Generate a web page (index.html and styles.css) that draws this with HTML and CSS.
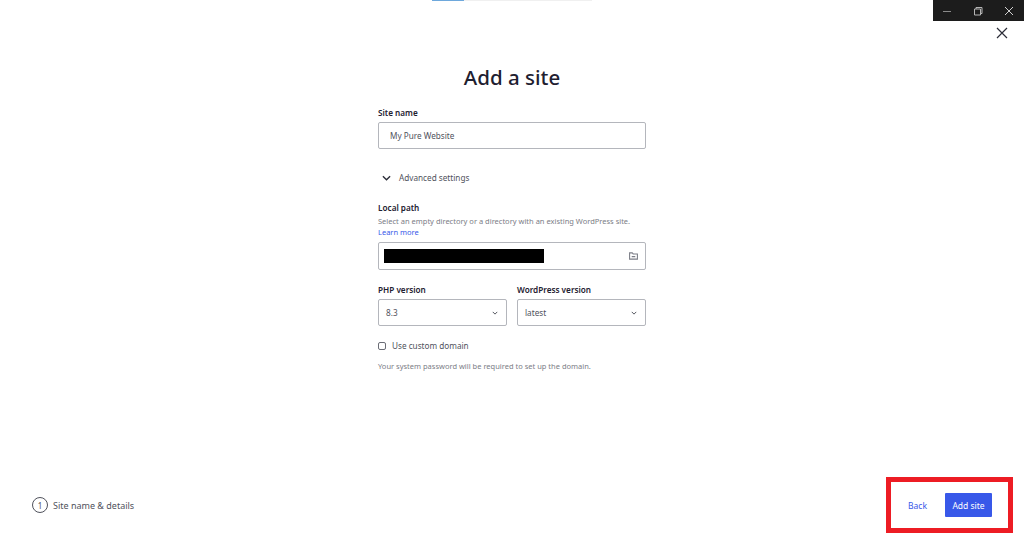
FILE: index.html
```html
<!DOCTYPE html>
<html lang="en">
<head>
    <meta charset="UTF-8">
    <title>Add a site</title>
    <link rel="stylesheet" href="styles.css">
</head>
<body>

<div class="progress"><div class="progress-fill"></div></div>

<!-- window buttons -->
<div class="window-controls">
    <div class="win-btn">
        <svg width="10" height="10" viewBox="0 0 10 10"><path d="M0 5.5H8" stroke="#8a8a8a" fill="none"/></svg>
    </div>
    <div class="win-btn">
        <svg width="10" height="10" viewBox="0 0 10 10"><path d="M1.5 3H7.5V9H1.5ZM3 3V1.5H9V7.5H7.5" stroke="#b5b5b5" fill="none"/></svg>
    </div>
    <div class="win-btn">
        <svg width="10" height="10" viewBox="0 0 10 10"><path d="M1 1L9 9M9 1L1 9" stroke="#d0d0d0" fill="none"/></svg>
    </div>
</div>

<div class="close-row">
    <svg width="12" height="12" viewBox="0 0 12 12"><path d="M1 1L11 11M11 1L1 11" stroke="#2b2d38" stroke-width="1.2" fill="none"/></svg>
</div>

<main class="content">
    <h1 class="title">Add a site</h1>

    <div class="form">
        <label class="label">Site name</label>
        <div class="input">My Pure Website</div>

        <div class="advanced">
            <svg width="9" height="6" viewBox="0 0 10 6"><path d="M1 1L5 5L9 1" stroke="#2b2d38" stroke-width="1.5" fill="none"/></svg>
            <span>Advanced settings</span>
        </div>

        <label class="label">Local path</label>
        <p class="hint">Select an empty directory or a directory with an existing WordPress site.<br><a class="link">Learn more</a></p>
        <div class="input input-path">
            <div class="redacted"></div>
            <svg width="9" height="8" viewBox="0 0 10 9"><path d="M0.6 8V1H3.6L4.6 2.2H9.4V8ZM3 5.2H7" stroke="#7b7d86" stroke-width="1.2" fill="none"/></svg>
        </div>

        <div class="versions">
            <div>
                <label class="label">PHP version</label>
                <div class="input select">
                    <span>8.3</span>
                    <svg width="6" height="4" viewBox="0 0 8 5"><path d="M1 1L4 4L7 1" stroke="#50525c" stroke-width="1.3" fill="none"/></svg>
                </div>
            </div>
            <div>
                <label class="label">WordPress version</label>
                <div class="input select">
                    <span>latest</span>
                    <svg width="6" height="4" viewBox="0 0 8 5"><path d="M1 1L4 4L7 1" stroke="#50525c" stroke-width="1.3" fill="none"/></svg>
                </div>
            </div>
        </div>

        <div class="checkbox-row">
            <span class="checkbox"></span>
            <span>Use custom domain</span>
        </div>
        <p class="hint domain-hint">Your system password will be required to set up the domain.</p>
    </div>
</main>

<footer class="footer">
    <div class="step">
        <span class="step-num">1</span>
        <span>Site name &amp; details</span>
    </div>
    <div class="actions">
        <a class="back">Back</a>
        <div class="primary">Add site</div>
    </div>
</footer>

<!-- red box drawn over the screenshot -->
<div class="highlight"></div>

</body>
</html>
```

FILE: styles.css
```css
* {
    box-sizing: border-box;
}
body {
    font-family: 'Noto Sans', 'Open Sans', sans-serif;
    margin: 0;
    background-color: #fff;
    color: #1e2030;
    height: 100vh;
    overflow: hidden;
    display: flex;
    flex-direction: column;
    position: relative;
}
.progress {
    width: 160px;
    height: 1px;
    margin: 0 auto;
    background-color: #f0f0f0;
    flex-shrink: 0;
}
.progress-fill {
    width: 32px;
    height: 100%;
    background-color: #6ea8dc;
}
.window-controls {
    position: absolute;
    top: 0;
    right: 0;
    width: 91px;
    height: 21px;
    background-color: #1c1c1c;
    display: flex;
}
.win-btn {
    flex: 1;
    display: flex;
    align-items: center;
    justify-content: center;
}
.close-row {
    display: flex;
    justify-content: flex-end;
    padding: 26px 16px 0 0;
    height: 39px;
    flex-shrink: 0;
}
.content {
    display: flex;
    flex-direction: column;
    align-items: center;
}
.title {
    margin: 21px 0 0;
    font-size: 20.5px;
    line-height: 32px;
    font-weight: 500;
}
.form {
    width: 268px;
    margin-top: 14px;
    font-size: 8.2px;
}
.label {
    display: block;
    font-size: 8.2px;
    line-height: 12px;
    font-weight: 600;
    color: #1e2030;
}
.input {
    height: 27px;
    margin-top: 3px;
    padding: 0 11px;
    border: 1px solid #b4b6bc;
    border-radius: 2px;
    display: flex;
    align-items: center;
    color: #50525c;
}
.advanced {
    display: flex;
    align-items: center;
    gap: 8px;
    margin: 23px 0 18px 4px;
    line-height: 12px;
    color: #50525c;
}
.hint {
    margin: 2px 0 0;
    font-size: 7.5px;
    line-height: 11px;
    color: #7b7d86;
}
.link {
    color: #3858e9;
}
.input-path {
    height: 28px;
    padding: 0 7px 0 5px;
    justify-content: space-between;
    margin-top: 4px;
}
.redacted {
    width: 160px;
    height: 14px;
    background-color: #000;
}
.versions {
    display: grid;
    grid-template-columns: 1fr 1fr;
    gap: 10px;
    margin-top: 14px;
}
.select {
    padding: 0 8px 0 7px;
    justify-content: space-between;
}
.checkbox-row {
    display: flex;
    align-items: center;
    gap: 6px;
    margin-top: 14px;
    line-height: 12px;
    color: #50525c;
}
.checkbox {
    width: 8px;
    height: 8px;
    border: 1px solid #6b6d76;
    border-radius: 2px;
}
.domain-hint {
    margin-top: 9px;
}
.footer {
    margin-top: auto;
    display: flex;
    justify-content: space-between;
    align-items: center;
    padding: 0 32px;
    height: 24px;
    margin-bottom: 30px;
}
.step {
    display: flex;
    align-items: center;
    gap: 5px;
    font-size: 9px;
    color: #50525c;
}
.step-num {
    width: 16px;
    height: 16px;
    border: 1px solid #50525c;
    border-radius: 50%;
    font-size: 8px;
    display: flex;
    align-items: center;
    justify-content: center;
}
.actions {
    display: flex;
    align-items: center;
    gap: 18px;
    font-size: 8.5px;
}
.back {
    color: #3858e9;
}
.primary {
    width: 47px;
    height: 24px;
    background-color: #3858e9;
    color: #fff;
    border-radius: 1px;
    display: flex;
    align-items: center;
    justify-content: center;
}
.highlight {
    position: absolute;
    left: 886px;
    top: 477px;
    width: 127px;
    height: 56px;
    border: 5px solid #ed1c24;
}
```
